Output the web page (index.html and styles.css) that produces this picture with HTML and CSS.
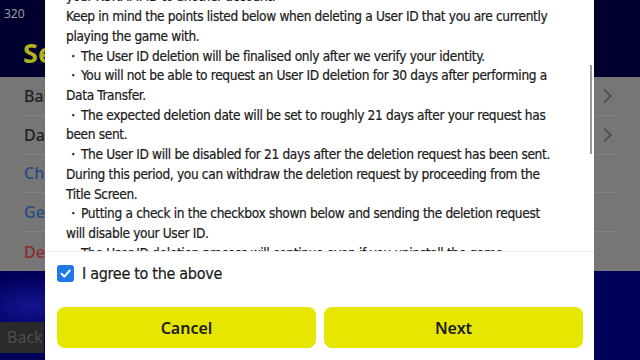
FILE: index.html
```html
<!DOCTYPE html>
<html lang="en">
<head>
<meta charset="utf-8">
<title>Delete User ID</title>
<link rel="stylesheet" href="styles.css">
</head>
<body>
<div class="screen">
  <header class="top">
    <div class="coins">320</div>
    <div class="title">Settings</div>
  </header>
  <ul class="menu">
    <li class="row dark"><span>Ball</span><span class="chev"></span></li>
    <li class="row dark"><span>Data</span><span class="chev"></span></li>
    <li class="row blue"><span>Check</span></li>
    <li class="row blue"><span>General</span></li>
    <li class="row red"><span>Delete</span></li>
  </ul>
  <footer class="bottom">
    <div class="back">Back</div>
  </footer>
</div>

<div class="modal">
  <div class="scroll">
    <div class="text">
      <span class="ln">your KONAMI ID to another account.</span>
      <span class="ln">Keep in mind the points listed below when deleting a User ID that you are currently</span>
      <span class="ln">playing the game with.</span>
      <span class="ln"><span class="dot">・</span><span>The User ID deletion will be finalised only after we verify your identity.</span></span>
      <span class="ln"><span class="dot">・</span><span>You will not be able to request an User ID deletion for 30 days after performing a</span></span>
      <span class="ln">Data Transfer.</span>
      <span class="ln"><span class="dot">・</span><span>The expected deletion date will be set to roughly 21 days after your request has</span></span>
      <span class="ln">been sent.</span>
      <span class="ln"><span class="dot">・</span><span>The User ID will be disabled for 21 days after the deletion request has been sent.</span></span>
      <span class="ln">During this period, you can withdraw the deletion request by proceeding from the</span>
      <span class="ln">Title Screen.</span>
      <span class="ln"><span class="dot">・</span><span>Putting a check in the checkbox shown below and sending the deletion request</span></span>
      <span class="ln">will disable your User ID.</span>
      <span class="ln"><span class="dot">・</span><span>The User ID deletion process will continue even if you uninstall the game.</span></span>
    </div>
    <div class="thumb"></div>
  </div>
  <div class="foot">
    <label class="agree">
      <span class="box"><svg viewBox="0 0 17 17" width="17" height="17"><path d="M4.5 8.8 L7.4 11.6 L12.6 5.6" fill="none" stroke="#fff" stroke-width="2" stroke-linecap="round" stroke-linejoin="round"/></svg></span>
      <span>I agree to the above</span>
    </label>
    <div class="buttons">
      <button class="btn">Cancel</button>
      <button class="btn">Next</button>
    </div>
  </div>
</div>
</body>
</html>
```
FILE: styles.css
```css
* { box-sizing: border-box; }
html, body { margin: 0; padding: 0; }
body {
  width: 640px;
  height: 360px;
  overflow: hidden;
  position: relative;
  font-family: "DejaVu Sans Condensed", "Noto Sans", sans-serif;
  background: #000040;
}
.screen {
  display: grid;
  grid-template-rows: 77px 194px 89px;
  height: 360px;
}
.top {
  background: #00002e;
  position: relative;
  padding: 6px 0 0 4px;
}
.coins {
  font-family: "Noto Sans", sans-serif;
  font-size: 12px;
  color: #9c9c9c;
  line-height: 16px;
}
.title {
  font-family: "Noto Sans", sans-serif;
  font-weight: 700;
  font-size: 27px;
  color: #b0b020;
  margin: 15px 0 0 19px;
  line-height: 32px;
}
.menu {
  list-style: none;
  margin: 0;
  padding: 0 24px 0 22px;
  background: #767676;
  display: flex;
  flex-direction: column;
}
.row {
  height: 39px;
  border-bottom: 1px solid #828282;
  display: flex;
  align-items: center;
  justify-content: space-between;
  padding-left: 2px;
  font-family: "Noto Sans", sans-serif;
  font-size: 16px;
  font-weight: 500;
}
.row:last-child { border-bottom: none; }
.dark { color: #1f1f1f; }
.blue { color: #274c86; }
.red { color: #8c2c2c; }
.chev {
  width: 10px;
  height: 10px;
  border-right: 2px solid #505050;
  border-bottom: 2px solid #505050;
  transform: rotate(-45deg);
  margin-right: 6px;
}
.bottom {
  background:
    radial-gradient(ellipse 60px 30px at 30px 35px, rgba(40,40,200,0.5), rgba(0,0,0,0) 100%),
    #00005a;
  display: flex;
  align-items: flex-start;
  padding-top: 51px;
}
.back {
  width: 44px;
  height: 31px;
  background: #2a2a2a;
  color: #4f4f4f;
  font-family: "Noto Sans", sans-serif;
  font-size: 16px;
  line-height: 31px;
  padding-left: 7px;
  overflow: hidden;
  white-space: nowrap;
}
.modal {
  position: absolute;
  left: 45px;
  top: 0;
  width: 549px;
  height: 360px;
  background: #fff;
  display: flex;
  flex-direction: column;
}
.scroll {
  height: 252px;
  overflow: hidden;
  position: relative;
  border-bottom: 1px solid #ececec;
}
.text {
  margin-top: -12.6px;
  padding-left: 21px;
  font-size: 13.6px;
  letter-spacing: -0.35px;
  line-height: 19.72px;
  color: #1b1b1b;
  -webkit-text-stroke: 0.2px #1b1b1b;
}
.ln {
  display: block;
  white-space: nowrap;
  height: 19.72px;
}
.dot {
  display: inline-block;
  width: 15px;
  letter-spacing: 0;
  vertical-align: top;
}
.thumb {
  position: absolute;
  right: 2px;
  top: 65px;
  width: 2px;
  height: 89px;
  background: #9a9a9a;
}
.foot {
  flex: 1;
  padding: 12px 11px 0 12px;
}
.agree {
  display: flex;
  align-items: center;
  gap: 8px;
  height: 19px;
  font-size: 16px;
  letter-spacing: -0.3px;
  color: #1b1b1b;
  -webkit-text-stroke: 0.2px #1b1b1b;
}
.box {
  width: 17px;
  height: 17px;
  border-radius: 3px;
  background: #1f78e6;
  display: block;
}
.box svg { display: block; }
.buttons {
  display: grid;
  grid-template-columns: 1fr 1fr;
  gap: 8px;
  margin-top: 24px;
}
.btn {
  height: 41px;
  border: none;
  border-radius: 8px;
  background: #e6e600;
  font-family: "Noto Sans", sans-serif;
  font-size: 16px;
  font-weight: 600;
  color: #1c1c1c;
  padding: 0;
}
```
